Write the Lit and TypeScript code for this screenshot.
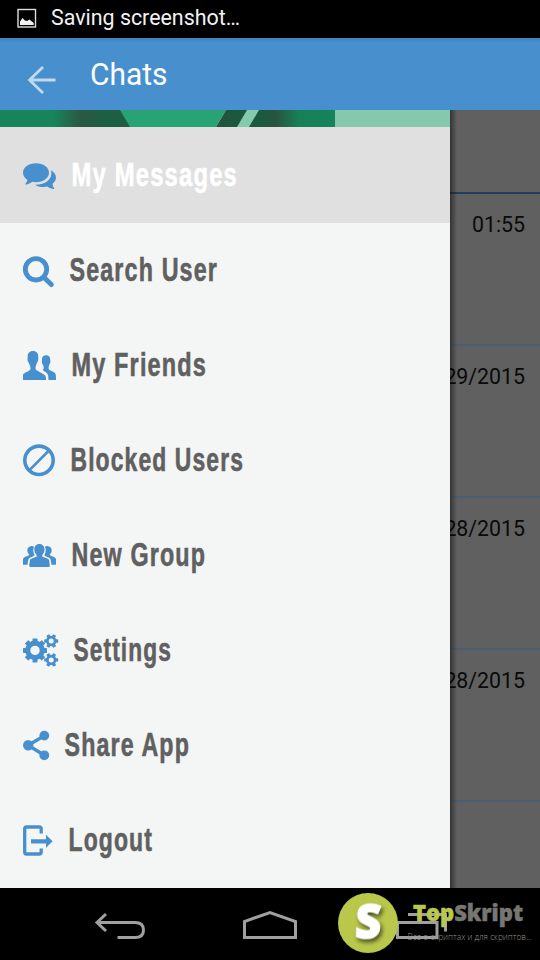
import { LitElement, html, css, svg, SVGTemplateResult } from "lit";
import { customElement, property } from "lit/decorators.js";

interface Item { label: string; x: number; w: number; icon: SVGTemplateResult; active?: boolean; }

const gear = (cx: number, cy: number, body: number, outer: number, hole: number, teeth: number, tooth: number, turn = 0) => svg`
  <g transform="translate(${cx} ${cy})">
    ${Array.from({ length: teeth }, (_, i) => svg`<rect x=${-tooth / 2} y=${-outer} width=${tooth} height=${outer - hole - 0.8} rx="0.6" transform="rotate(${turn + (i * 360) / teeth})"/>`)}
    <circle r=${(body + hole) / 2} fill="none" stroke="currentColor" stroke-width=${body - hole}/>
  </g>`;

const sidePerson = "M30.800 39.200C32.200 38.900 33.300 39.200 34 39.900C32.700 42.500 33.200 45.500 34.600 48C34.200 49.500 30.500 50 28.900 51.500C28 53 27.800 55.500 27.600 57.800H23V52C23.700 49.700 28.100 49.300 29.500 47.800C28 46.500 27.400 45 27.300 43.200C27.300 41 28.800 39.500 30.800 39.200Z";

const items: Item[] = [
  { label: "My Messages", x: 72, w: 165, active: true, icon: svg`
    <path d="M51 43.2C54 45 56 47.500 56 50.500C56 53 54.700 55 52.700 56.500C52.500 58.500 53.200 60 54.200 61.200C54.500 62 53.600 62.200 53 62C50.500 61.600 48.700 60.600 47.300 59.600C43 60.700 37.700 59.700 35 57.700C43.500 58 51.500 53.500 51.300 46.500C51.300 45.300 51.200 44.300 51 43.200Z"/>
    <path d="M36 36.200C43.200 36.200 49 40.300 49 45.700C49 51 43.200 55.200 36 55.200C34.700 55.200 33.500 55.100 32.300 54.800C30.400 56.200 28.200 57.300 26 57.500C25.300 57.600 25.200 57 25.600 56.600C26.600 55.500 27.300 54.300 27.500 53C24.700 51.200 23 48.600 23 45.700C23 40.300 28.800 36.200 36 36.200Z"/>` },
  { label: "Search User", x: 70, w: 147, icon: svg`
    <circle cx="36" cy="47.300" r="10.700" fill="none" stroke="currentColor" stroke-width="4.800"/>
    <path d="M44.500 56L51.300 62.500" stroke="currentColor" stroke-width="5" stroke-linecap="round"/>` },
  { label: "My Friends", x: 72, w: 134, icon: svg`
    <path d="M46 38.300C49 38.300 50.300 40.100 50.200 42.500L50.400 44C50.600 45.500 49.800 46.500 49.600 47.200C49 48.700 48.500 49.700 48.600 51.800C49 53.500 53 54.400 54.700 55.800C56 57 56 59 56 63H48.500L48.200 58.400C47.500 56 44.700 54.500 42.500 53C44.500 52.100 43.800 50 42.800 47.500C42 46.500 41.500 45.500 41.900 44L42 42.500C41.800 40 43.200 38.300 46 38.300Z"/>
    <path d="M32.900 33.900C36.500 33.900 38.500 36.200 38.200 39.600L38.300 42.200C38.200 43.600 37.700 44.600 37.200 45.500C36.500 47.500 35.400 48.500 35.500 51.700C36.500 54.200 41.500 55.300 44.400 57.700C46 59 46 60.500 46 63H23V57.500C25 55 29.500 54.500 30.600 51.700C30.700 49.500 29.300 48 28.700 45.500C28 44.700 27.500 43.500 27.500 42.200L27.700 39.600C27.300 36.200 29.500 33.900 32.900 33.900Z"/>` },
  { label: "Blocked Users", x: 71, w: 172, icon: svg`
    <circle cx="39" cy="48.300" r="14.200" fill="none" stroke="currentColor" stroke-width="3.600"/>
    <path d="M30 57.600L48.500 39" stroke="currentColor" stroke-width="2.700"/>` },
  { label: "New Group", x: 72, w: 133, icon: svg`
    <path d=${sidePerson}/>
    <path transform="translate(79 0) scale(-1 1)" d=${sidePerson}/>
    <path d="M39.400 37C42.600 37 44.500 39.300 44.500 42.200C44.500 45 43.300 46.700 42.200 48.200V49.500C44 50.800 48.600 51 49.200 53.200L49.800 58.500Q49.800 60 48.500 60H30.400Q29.200 60 29.200 58.500L29.900 53.200C30.400 51 35 50.800 36.700 49.500V48.200C35.500 46.700 34.300 45 34.300 42.200C34.300 39.300 36.200 37 39.400 37Z"/>` },
  { label: "Settings", x: 74, w: 97, icon: svg`
    ${gear(35, 48.4, 9.8, 12, 4.7, 8, 5)}
    ${gear(51.2, 39, 5.2, 7, 2.5, 6, 3.4, 30)}
    ${gear(51.2, 57.900, 5.2, 7, 2.5, 6, 3.4, 30)}` },
  { label: "Share App", x: 65, w: 124, icon: svg`
    <path d="M44.400 38.700L28 48.300L44.400 58.300" fill="none" stroke="currentColor" stroke-width="3.400"/>
    <circle cx="28.200" cy="48.300" r="5.200"/><circle cx="44.300" cy="38.600" r="4.900"/><circle cx="44.300" cy="58.300" r="4.900"/>` },
  { label: "Logout", x: 69, w: 83, icon: svg`
    <path d="M41.200 41.500V37Q41.200 35 39.200 35H26.500Q24.700 35 24.700 37V60Q24.700 62 26.500 62H39.200Q41.200 62 41.200 60V56.500" fill="none" stroke="currentColor" stroke-width="3.300"/>
    <path d="M31 47.200H46V42.700L52.600 49.200L46 55.700V51.500H31Z"/>` },
];

@customElement("drawer-item")
class DrawerItem extends LitElement {
  @property({ attribute: false }) item!: Item;
  static styles = css`
    :host { display: block; height: 95px; }
    .row { display: flex; height: 95px; padding-left: 23px; color: #4790cd; }
    .active { height: 96px; background: #e0e0e0; }
    svg { display: block; flex: none; overflow: visible; fill: currentColor; }
    .label { font: 700 33px "Liberation Sans Narrow", "Liberation Sans", sans-serif; letter-spacing: 1.6px; fill: #606060; stroke: #606060; stroke-width: .6; }
    .active .label { fill: #fff; stroke: #fff; }
  `;
  render() {
    const { label, x, w, icon, active } = this.item;
    return html`<div class="row ${active ? "active" : ""}">
      <svg width=${x - 23} height="95" viewBox="23 0 ${x - 23} 95">${icon}</svg>
      <svg width=${w} height="95"><text class="label" x="-0.500" y="59.300" textLength=${w + 1.5} lengthAdjust="spacingAndGlyphs">${label}</text></svg>
    </div>`;
  }
}

@customElement("app-root")
class AppRoot extends LitElement {
  static styles = css`
    :host { display: flex; flex-direction: column; width: 540px; height: 960px; overflow: hidden; background: #000; font-family: Roboto, "Noto Sans", sans-serif; }
    svg { display: block; flex: none; }
    .status { height: 38px; flex: none; }
    .header { height: 72px; flex: none; background: linear-gradient(#3f80b8, #4790cd 4px); }
    .main { height: 778px; flex: none; display: grid; grid-template-columns: 450px 90px; }
    .drawer { background: #f4f6f6; overflow: hidden; }
    .chats { position: relative; overflow: hidden; background: #606060; color: #0a0a0a; font-size: 21.3px; }
    .chats::after { content: ""; position: absolute; inset: 0 auto 0 0; width: 7px; background: linear-gradient(90deg, #0007, #0000); }
    .top { height: 82px; border-bottom: 2px solid #213e5a; }
    .chat { height: 150px; border-bottom: 2px solid #4a5f74; display: flex; justify-content: flex-end; }
    .chat span { margin: 18px 15px 0 0; line-height: 25px; height: 25px; white-space: nowrap; }
    .nav { height: 72px; flex: none; }
    .line { fill: none; stroke: #a0a0a0; stroke-width: 3; }
    .logo { font: 800 47px "Open Sans", Lato, sans-serif; fill: #fff; filter: drop-shadow(2px 3px 2px #0009); }
    .brand { font: 800 22px "Open Sans", Lato, sans-serif; fill: #777772; stroke: #777772; stroke-width: .5; }
    .accent { fill: #b9c84b; stroke: #b9c84b; }
    .tag { font: 300 9.5px "Open Sans", "Noto Sans", sans-serif; fill: #94948e; }
  `;
  render() {
    return html`
      <svg class="status" width="540" height="38" fill="#f2f2f2">
        <rect x="18" y="9.500" width="17.500" height="17.500" fill="none" stroke="#ddd" stroke-width="1.400"/>
        <path d="M20 25V21.500L22.500 18L25 20.500L27 21L29.500 19.500L33.700 23V25Z"/>
        <text x="51" y="25.400" font-size="21.500" textLength="189" lengthAdjust="spacingAndGlyphs">Saving screenshot…</text>
      </svg>
      <div class="header"><svg width="540" height="72">
        <path d="M43 29L29.500 42L43 55M29.500 42H55.500" fill="none" stroke="#bfd9ef" stroke-width="2.800"/>
        <text x="90" y="47" font-size="30.500" fill="#fff" textLength="77.500" lengthAdjust="spacingAndGlyphs">Chats</text>
      </svg></div>
      <div class="main">
        <div class="drawer">
          <svg width="450" height="17">
            <defs>
              <linearGradient id="a"><stop offset=".4" stop-color="#18845b"/><stop offset=".6" stop-color="#2a5841"/><stop offset=".8" stop-color="#1a6043"/><stop offset="1" stop-color="#235a42"/></linearGradient>
              <linearGradient id="b"><stop offset="0" stop-color="#20553d"/><stop offset=".35" stop-color="#195b3e"/><stop offset=".5" stop-color="#28543e"/><stop offset=".7" stop-color="#188057"/><stop offset="1" stop-color="#15835b"/></linearGradient>
            </defs>
            <rect width="135" height="17" fill="url(#a)"/>
            <path d="M120 0H226L216 17H130Z" fill="#28a375"/>
            <path d="M226 0H335V17H216Z" fill="url(#b)"/>
            <path d="M247 0H259L249 17H237Z" fill="#84cbae"/>
            <rect x="335" width="115" height="17" fill="#84c9ad"/>
          </svg>
          ${items.map((item) => html`<drawer-item .item=${item}></drawer-item>`)}
        </div>
        <div class="chats">
          <div class="top"></div>
          ${["01:55", "12/29/2015", "12/28/2015", "12/28/2015"].map((d) => html`<div class="chat"><span>${d}</span></div>`)}
        </div>
      </div>
      <svg class="nav" width="540" height="72" viewBox="0 888 540 72">
        <path class="line" d="M106 914L97 922.500L106 931M97 922.500H135Q143.500 922.500 143.500 930Q143.500 937.500 135 937.500H117.500"/>
        <path class="line" d="M244.500 937.500V921.500L270 912.500L295.500 921.500V937.500Z"/>
        <path class="line" d="M397.500 922.500H437V937.500H397.500ZM408 914.500H445.500V931.500"/>
        <circle cx="368" cy="923" r="30" fill="#b9c84b"/>
        <text class="logo" transform="translate(354.500 938.500) skewX(-3)" stroke="#fff" stroke-width="1.500" textLength="26" lengthAdjust="spacingAndGlyphs">S</text>
        <text class="brand" x="413" y="920.700" textLength="110" lengthAdjust="spacingAndGlyphs"><tspan class="accent">Top</tspan>Skript</text>
        <text class="tag" x="407.500" y="940" textLength="124.500" lengthAdjust="spacingAndGlyphs">Все о скриптах и для скриптов...</text>
      </svg>`;
  }
}
